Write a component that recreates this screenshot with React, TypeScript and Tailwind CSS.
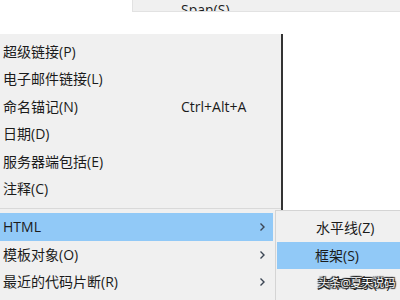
import React from 'react'

const font = { fontFamily: '"Open Sans", "Noto Sans CJK SC", sans-serif' }

type Item = { label: string; shortcut?: string; sub?: boolean; active?: boolean }

const topItems: Item[] = [
  { label: '超级链接(P)' },
  { label: '电子邮件链接(L)' },
  { label: '命名锚记(N)', shortcut: 'Ctrl+Alt+A' },
  { label: '日期(D)' },
  { label: '服务器端包括(E)' },
  { label: '注释(C)' },
]

const bottomItems: Item[] = [
  { label: 'HTML', sub: true, active: true },
  { label: '模板对象(O)', sub: true },
  { label: '最近的代码片断(R)', sub: true },
]

function Chevron() {
  return (
    <svg width="7" height="10" viewBox="0 0 7 10" className="ml-auto mr-[7px]">
      <path d="M1.5 1.5 L5 5 L1.5 8.5" fill="none" stroke="#3c4654" strokeWidth="1.4" />
    </svg>
  )
}

function Row({ item, h }: { item: Item; h: string }) {
  return (
    <div
      className={`flex items-center mr-[8px] pl-[3px] text-[14px] leading-none text-[#1b1b1b] ${h} ${
        item.active ? 'bg-[#91c9f7]' : ''
      }`}
    >
      <span className="w-[178px] shrink-0 whitespace-nowrap">{item.label}</span>
      {item.shortcut && <span className="whitespace-nowrap">{item.shortcut}</span>}
      {item.sub && <Chevron />}
    </div>
  )
}

export default function App() {
  return (
    <div className="relative w-[400px] h-[300px] bg-white overflow-hidden" style={font}>
      {/* window behind, mostly hidden */}
      <div className="ml-[132px] h-[12px] bg-[#f0f0f0] border-l border-b border-[#e2e2e2] overflow-hidden">
        <div className="pl-[48px] pt-[3px] text-[14px] leading-none text-[#1b1b1b]">Span(S)</div>
      </div>

      {/* main menu */}
      <div className="mt-[22px] w-[283px] h-[266px] bg-[#f0f0f0] border-r-2 border-[#333333] pt-[4px]">
        {topItems.map((it) => (
          <Row key={it.label} item={it} h="h-[27.5px]" />
        ))}
        <div className="h-[10px] flex items-center">
          <div className="w-full h-px bg-[#d9d9d9]" />
        </div>
        {bottomItems.map((it, i) => (
          <Row key={it.label} item={it} h={i === 0 ? 'h-[28px]' : 'h-[27.5px]'} />
        ))}
      </div>

      {/* submenu */}
      <div className="absolute left-[275px] top-[210px] w-[130px] h-[95px] bg-[#f0f0f0] border-l border-t border-[#d4d4d4] pt-[3px] pl-[1px] flex flex-col text-[14px] leading-none text-[#1b1b1b]">
        <div className="h-[28px] flex items-center pl-[39px] whitespace-nowrap">水平线(Z)</div>
        <div className="h-[27px] flex items-center pl-[38px] bg-[#91c9f7] whitespace-nowrap">框架(S)</div>
        <div className="relative h-[27px] flex items-center pl-[40px] whitespace-nowrap">
          <span>文本对象(B)</span>
          <span
            className="absolute left-[41px] text-[11.5px] tracking-[-0.3px] text-white whitespace-nowrap"
            style={{ textShadow: '0 0 1px #222, 1px 1px 1px #222, -1px -1px 1px #222, 1px -1px 1px #222, -1px 1px 1px #222' }}
          >
            头条@夏天说码
          </span>
        </div>
      </div>
    </div>
  )
}
